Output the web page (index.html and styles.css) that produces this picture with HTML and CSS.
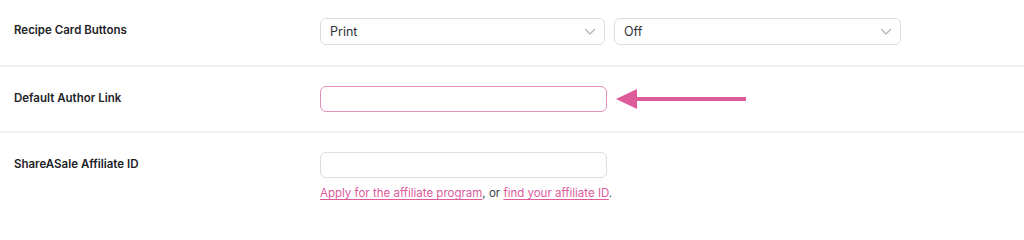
FILE: index.html
```html
<!DOCTYPE html>
<html>
<head>
<meta charset="utf-8">
<link rel="stylesheet" href="styles.css">
</head>
<body>
<div class="settings">
  <div class="row">
    <div class="label">Recipe Card Buttons</div>
    <div class="field">
      <div class="selects">
        <div class="select"><span>Print</span><svg class="chev" width="12" height="8" viewBox="0 0 12 8"><path d="M1.5 1.5 L6 6 L10.5 1.5" fill="none" stroke="#b4b6bc" stroke-width="1.4" stroke-linecap="round" stroke-linejoin="round"/></svg></div>
        <div class="select wide"><span>Off</span><svg class="chev" width="12" height="8" viewBox="0 0 12 8"><path d="M1.5 1.5 L6 6 L10.5 1.5" fill="none" stroke="#b4b6bc" stroke-width="1.4" stroke-linecap="round" stroke-linejoin="round"/></svg></div>
      </div>
    </div>
  </div>
  <div class="row">
    <div class="label">Default Author Link</div>
    <div class="field with-arrow">
      <div class="input highlight"></div>
      <svg class="arrow" width="132" height="22" viewBox="0 0 132 22"><polygon points="0,11 21,1 21,9 130,9 130,13 21,13 21,21" fill="#dd5a9b"/></svg>
    </div>
  </div>
  <div class="row last">
    <div class="label">ShareASale Affiliate ID</div>
    <div class="field">
      <div class="input"></div>
      <p class="desc"><a href="#">Apply for the affiliate program</a>, or <a href="#">find your affiliate ID</a>.</p>
    </div>
  </div>
</div>
</body>
</html>
```
FILE: styles.css
```css
* { box-sizing: border-box; }
html, body { margin: 0; padding: 0; background: #fff; }
body { font-family: Inter, "Noto Sans", sans-serif; color: #1d2327; width: 1024px; height: 226px; overflow: hidden; }
.settings { display: flex; flex-direction: column; }
.row { display: grid; grid-template-columns: 320px 1fr; padding: 19px 0; border-bottom: 2px solid #f0f0f2; }
.row:first-child { padding-top: 18px; padding-bottom: 20px; }
.row.last { border-bottom: none; }
.label { padding-left: 14px; font-size: 11.5px; font-weight: 600; line-height: 24px; color: #1d2327; }
.field { display: flex; flex-direction: column; }
.selects { display: flex; gap: 9px; }
.select { width: 285px; height: 27px; border: 1px solid #dcdce2; border-radius: 6px; display: flex; align-items: center; justify-content: space-between; padding: 0 8px 0 9px; font-size: 12.5px; color: #2c3338; }
.select.wide { width: 287px; }
.input { width: 287px; height: 26px; border: 1px solid #dcdce2; border-radius: 6px; }
.input.highlight { border-color: #e48fba; }
.with-arrow { flex-direction: row; align-items: center; gap: 9px; }
.arrow { display: block; }
.desc { margin: 7px 0 0; font-size: 11.5px; line-height: 16px; color: #3c434a; }
.desc a { color: #dd5a9b; text-decoration: underline; text-underline-offset: 2px; }
```
